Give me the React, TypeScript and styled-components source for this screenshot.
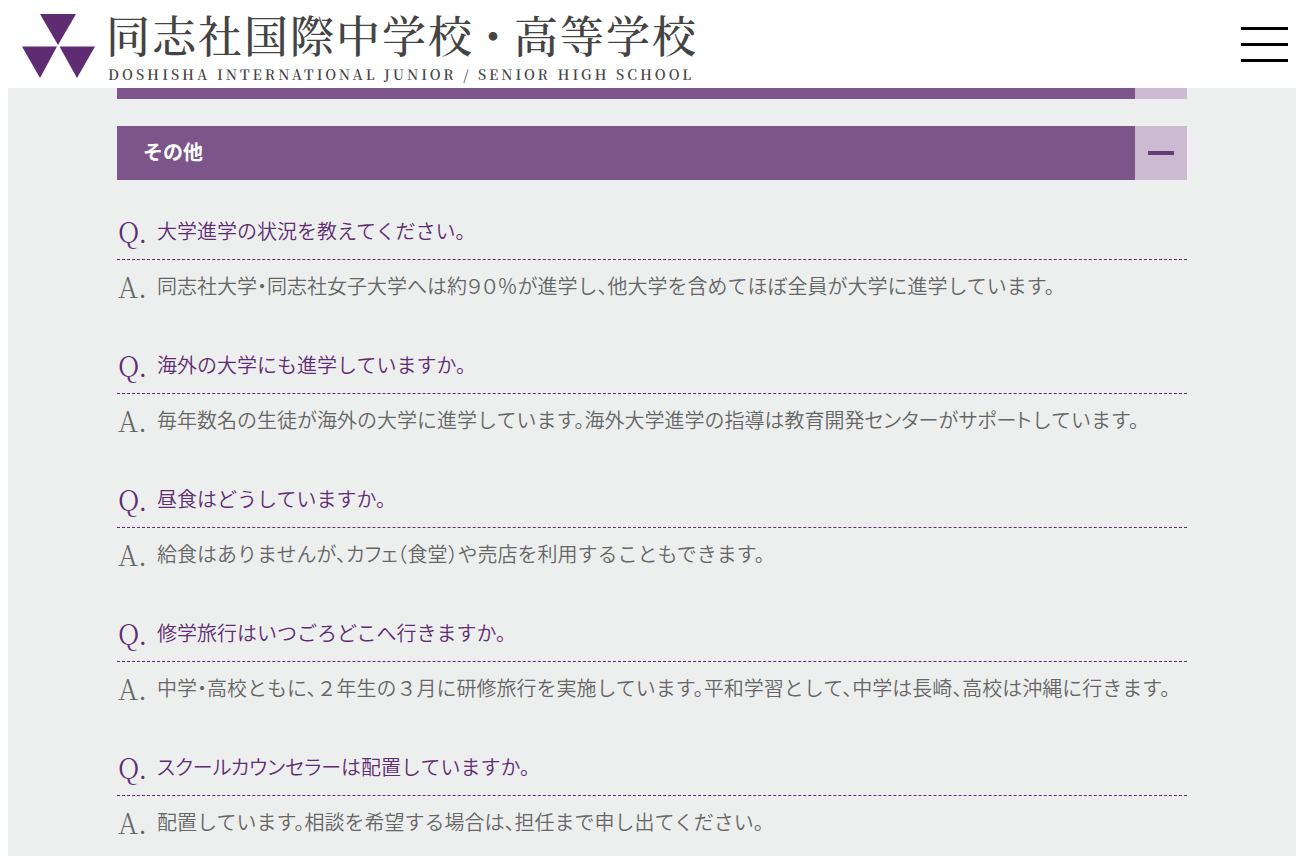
import React from "react";
import styled, { createGlobalStyle } from "styled-components";

const GlobalStyle = createGlobalStyle`
  * { box-sizing: border-box; }
  body {
    margin: 0;
    background: #fff;
    color: #666;
    font-family: "Noto Sans CJK JP", sans-serif;
    font-size: 20px;
    font-weight: 350;
    font-feature-settings: "halt";
  }
`;

const Page = styled.div`
  display: flex;
  flex-direction: column;
  min-height: 100vh;
`;

const Header = styled.header`
  display: flex;
  align-items: center;
  justify-content: space-between;
  height: 88px;
  padding: 0 20px;
  background: #fff;
`;

const Brand = styled.a`
  display: flex;
  align-items: center;
  gap: 10px;
  padding-top: 4px;
  color: #444;
  text-decoration: none;
`;

const Mark = styled.svg`
  display: block;
  width: 76px;
  height: 66px;
  fill: #5f2c73;
`;

const BrandText = styled.span`
  display: flex;
  flex-direction: column;
  gap: 4px;
  font-family: "Noto Serif CJK JP", "Noto Sans CJK JP", serif;
  white-space: nowrap;
`;

const BrandName = styled.span`
  font-size: 44px;
  font-weight: 500;
  line-height: 52px;
  letter-spacing: 2px;
  font-feature-settings: normal;
`;

const BrandDot = styled.span`
  margin: 0 8px;
  font-feature-settings: "palt";
`;

const BrandLatin = styled.span`
  padding-left: 2px;
  font-size: 14px;
  font-weight: 600;
  line-height: 20px;
  letter-spacing: 3px;
`;

const MenuButton = styled.button`
  display: flex;
  flex-direction: column;
  gap: 13px;
  width: 47px;
  padding: 0;
  border: 0;
  background: none;
`;

const MenuLine = styled.span`
  height: 3px;
  background: #000;
`;

const Main = styled.main`
  flex: 1;
  margin: 0 12px 0 8px;
  padding: 0 109px;
  background: #edefee;
`;

const BarEdge = styled.div`
  display: flex;
  height: 11px;
  margin-bottom: 27px;
  background: linear-gradient(to left, #cbbad0 52px, #7c568a 52px);
`;

const Bar = styled.button`
  display: flex;
  align-items: stretch;
  width: 100%;
  height: 54px;
  padding: 0;
  border: 0;
  background: #7c568a;
  color: #fff;
  font: inherit;
  font-weight: 700;
  text-align: left;
`;

const BarTitle = styled.span`
  flex: 1;
  padding-left: 26px;
  line-height: 52px;
`;

const BarToggle = styled.span`
  display: flex;
  align-items: center;
  justify-content: center;
  width: 52px;
  background: #cbbad0;
`;

const Minus = styled.span`
  width: 26px;
  height: 4px;
  background: #673a7a;
`;

const List = styled.dl`
  display: flex;
  flex-direction: column;
  gap: 25px;
  margin: 22px 0 0;
`;

const Question = styled.dt`
  display: flex;
  align-items: center;
  min-height: 58px;
  border-bottom: 1px dashed #5f2c73;
  color: #5f2c73;
`;

const Answer = styled.dd`
  display: flex;
  align-items: center;
  min-height: 51px;
  margin: 0;
`;

const Letter = styled.span`
  flex: none;
  width: 40px;
  padding-left: 1px;
  font-family: "Noto Serif CJK JP", serif;
  font-size: 28px;
  font-weight: 300;
  line-height: 32px;
`;

const Proportional = styled.span`
  font-feature-settings: "palt";
`;

// Katakana and multi-digit figures are set proportionally, the rest on the em grid.
function Sentence({ text }: { text: string }) {
  return (
    <span>
      {text.split(/([ァ-ー]+|[０-９％]{2,})/).map((part, i) =>
        i % 2 ? <Proportional key={i}>{part}</Proportional> : part
      )}
    </span>
  );
}

const faqs = [
  ["大学進学の状況を教えてください。", "同志社大学・同志社女子大学へは約９０％が進学し、他大学を含めてほぼ全員が大学に進学しています。"],
  ["海外の大学にも進学していますか。", "毎年数名の生徒が海外の大学に進学しています。海外大学進学の指導は教育開発センターがサポートしています。"],
  ["昼食はどうしていますか。", "給食はありませんが、カフェ（食堂）や売店を利用することもできます。"],
  ["修学旅行はいつごろどこへ行きますか。", "中学・高校ともに、２年生の３月に研修旅行を実施しています。平和学習として、中学は長崎、高校は沖縄に行きます。"],
  ["スクールカウンセラーは配置していますか。", "配置しています。相談を希望する場合は、担任まで申し出てください。"],
];

export default function App() {
  return (
    <Page lang="ja">
      <GlobalStyle />
      <Header>
        <Brand href="#">
          <Mark viewBox="0 0 76 66" aria-hidden="true">
            <path d="M20 1H56L38 32ZM2 33.500H37L20 65ZM39.500 33.500H75L57 65Z" />
          </Mark>
          <BrandText>
            <BrandName>
              同志社国際中学校<BrandDot>・</BrandDot>高等学校
            </BrandName>
            <BrandLatin>DOSHISHA INTERNATIONAL JUNIOR / SENIOR HIGH SCHOOL</BrandLatin>
          </BrandText>
        </Brand>
        <MenuButton type="button" aria-label="メニュー">
          <MenuLine />
          <MenuLine />
          <MenuLine />
        </MenuButton>
      </Header>
      <Main>
        <BarEdge />
        <Bar type="button" aria-expanded="true">
          <BarTitle>その他</BarTitle>
          <BarToggle>
            <Minus />
          </BarToggle>
        </Bar>
        <List>
          {faqs.map(([question, answer]) => (
            <div key={question}>
              <Question>
                <Letter>Q.</Letter>
                <Sentence text={question} />
              </Question>
              <Answer>
                <Letter>A.</Letter>
                <Sentence text={answer} />
              </Answer>
            </div>
          ))}
        </List>
      </Main>
    </Page>
  );
}
